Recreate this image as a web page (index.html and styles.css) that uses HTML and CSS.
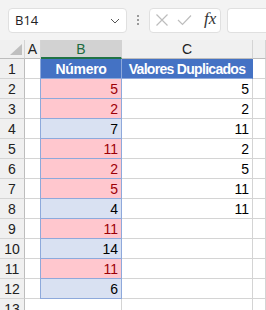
FILE: index.html
```html
<!DOCTYPE html>
<html lang="es">

<head>
    <meta charset="UTF-8">
    <title>Valores Duplicados</title>
    <link rel="stylesheet" href="styles.css">
</head>

<body>
    <div class="toolbar">
        <div class="name-box">
            <span>B14</span>
            <svg class="chevron" width="10" height="6" viewBox="0 0 10 6"><path d="M1 1 L5 5 L9 1" fill="none" stroke="#555" stroke-width="1"/></svg>
        </div>
        <div class="dots"><i></i><i></i><i></i></div>
        <div class="fx-box">
            <svg width="14" height="14" viewBox="0 0 14 14"><path d="M1.5 1.5 L12.5 12.5 M12.5 1.5 L1.5 12.5" stroke="#bdbdbd" stroke-width="1.2"/></svg>
            <svg width="15" height="12" viewBox="0 0 15 12"><path d="M1 6 L5.5 10.5 L14 1.5" fill="none" stroke="#bdbdbd" stroke-width="1.2"/></svg>
            <span class="fx">fx</span>
        </div>
        <div class="formula-input"></div>
    </div>

    <div class="sheet">
        <div class="corner"><span class="tri"></span></div>
        <div class="col-head">A</div>
        <div class="col-head selected">B</div>
        <div class="col-head">C</div>
        <div class="col-head last"></div>

        <div class="row-head">1</div>
        <div class="cell a"></div>
        <div class="cell b title">Número</div>
        <div class="cell c title">Valores Duplicados</div>
        <div class="cell d"></div>

        <div class="row-head">2</div><div class="cell a"></div><div class="cell b dup">5</div><div class="cell c">5</div><div class="cell d"></div>
        <div class="row-head">3</div><div class="cell a"></div><div class="cell b dup">2</div><div class="cell c">2</div><div class="cell d"></div>
        <div class="row-head">4</div><div class="cell a"></div><div class="cell b uniq">7</div><div class="cell c">11</div><div class="cell d"></div>
        <div class="row-head">5</div><div class="cell a"></div><div class="cell b dup">11</div><div class="cell c">2</div><div class="cell d"></div>
        <div class="row-head">6</div><div class="cell a"></div><div class="cell b dup">2</div><div class="cell c">5</div><div class="cell d"></div>
        <div class="row-head">7</div><div class="cell a"></div><div class="cell b dup">5</div><div class="cell c">11</div><div class="cell d"></div>
        <div class="row-head">8</div><div class="cell a"></div><div class="cell b uniq">4</div><div class="cell c">11</div><div class="cell d"></div>
        <div class="row-head">9</div><div class="cell a"></div><div class="cell b dup">11</div><div class="cell c"></div><div class="cell d"></div>
        <div class="row-head">10</div><div class="cell a"></div><div class="cell b uniq">14</div><div class="cell c"></div><div class="cell d"></div>
        <div class="row-head">11</div><div class="cell a"></div><div class="cell b dup">11</div><div class="cell c"></div><div class="cell d"></div>
        <div class="row-head">12</div><div class="cell a"></div><div class="cell b uniq">6</div><div class="cell c"></div><div class="cell d"></div>
        <div class="row-head">13</div><div class="cell a"></div><div class="cell"></div><div class="cell c"></div><div class="cell d"></div>
    </div>
</body>

</html>
```

FILE: styles.css
```css
body {
    margin: 0;
    background-color: #ffffff;
    font-family: "Liberation Sans", Arial, sans-serif;
    overflow: hidden;
}

.toolbar {
    height: 40px;
    background-color: #f3f3f3;
    display: flex;
    align-items: center;
    padding-left: 8px;
    box-sizing: border-box;
}

.name-box {
    width: 119px;
    height: 25px;
    box-sizing: border-box;
    background: #ffffff;
    border: 1px solid #e0e0e0;
    border-radius: 4px;
    display: flex;
    align-items: center;
    justify-content: space-between;
    padding: 0 6px 0 6px;
    font-family: "Open Sans", sans-serif;
    font-size: 13px;
    color: #222;
}

.chevron {
    margin-top: 1px;
}

.dots {
    width: 22px;
    display: flex;
    flex-direction: column;
    align-items: center;
    gap: 2px;
}

.dots i {
    width: 2px;
    height: 2px;
    background: #9a9a9a;
}

.fx-box {
    width: 72px;
    height: 25px;
    box-sizing: border-box;
    background: #ffffff;
    border: 1px solid #e0e0e0;
    border-radius: 4px;
    display: flex;
    align-items: center;
    gap: 8px;
    padding-left: 5px;
}

.fx {
    font-family: "Liberation Serif", serif;
    font-style: italic;
    font-size: 17px;
    color: #333;
    margin-left: 4px;
    margin-top: -2px;
}

.formula-input {
    margin-left: 6px;
    flex: 1;
    height: 25px;
    box-sizing: border-box;
    background: #ffffff;
    border: 1px solid #e0e0e0;
    border-right: none;
    border-radius: 4px 0 0 4px;
}

.sheet {
    display: grid;
    grid-template-columns: 25px 16px 81px 131px 1fr;
    grid-template-rows: 19px repeat(13, 20px);
    font-size: 14px;
}

.sheet > div {
    box-sizing: border-box;
    border-right: 1px solid #d4d4d4;
    border-bottom: 1px solid #d4d4d4;
    display: flex;
    align-items: center;
}

.corner {
    background: #f0f0f0;
    border-bottom-color: #bdbdbd !important;
    position: relative;
}

.tri {
    position: absolute;
    left: 10px;
    top: 4px;
    width: 0;
    height: 0;
    border-left: 12px solid transparent;
    border-bottom: 11px solid #bfbfbf;
}

.col-head {
    background: #f0f0f0;
    justify-content: center;
    color: #222;
    border-bottom-color: #bdbdbd !important;
}

.col-head.selected {
    background: #d2d2d2;
    color: #1d6b3e;
    border-bottom: 2px solid #217346 !important;
    border-right-color: #d2d2d2 !important;
}

.row-head {
    background: #f0f0f0;
    justify-content: center;
    color: #222;
    border-right-color: #bdbdbd !important;
}

.cell {
    justify-content: flex-end;
    padding-right: 3px;
}

.cell.a {
    border-right: none !important;
}

.cell.b {
    border-left: 1px solid #8ea9db;
    border-right: 1px solid #8ea9db !important;
    border-bottom: 1px solid #8ea9db !important;
    margin-left: -1px;
}

.cell.title {
    background: #4472c4;
    color: #ffffff;
    font-weight: bold;
    justify-content: center;
    padding: 0;
    letter-spacing: -0.3px;
}

.cell.c.title {
    border-right-color: #4472c4 !important;
    border-bottom-color: #8ea9db !important;
    letter-spacing: -0.7px;
}

.cell.dup {
    background: #ffc7ce;
    color: #9c0006;
}

.cell.uniq {
    background: #d9e1f2;
    color: #000000;
}
```
